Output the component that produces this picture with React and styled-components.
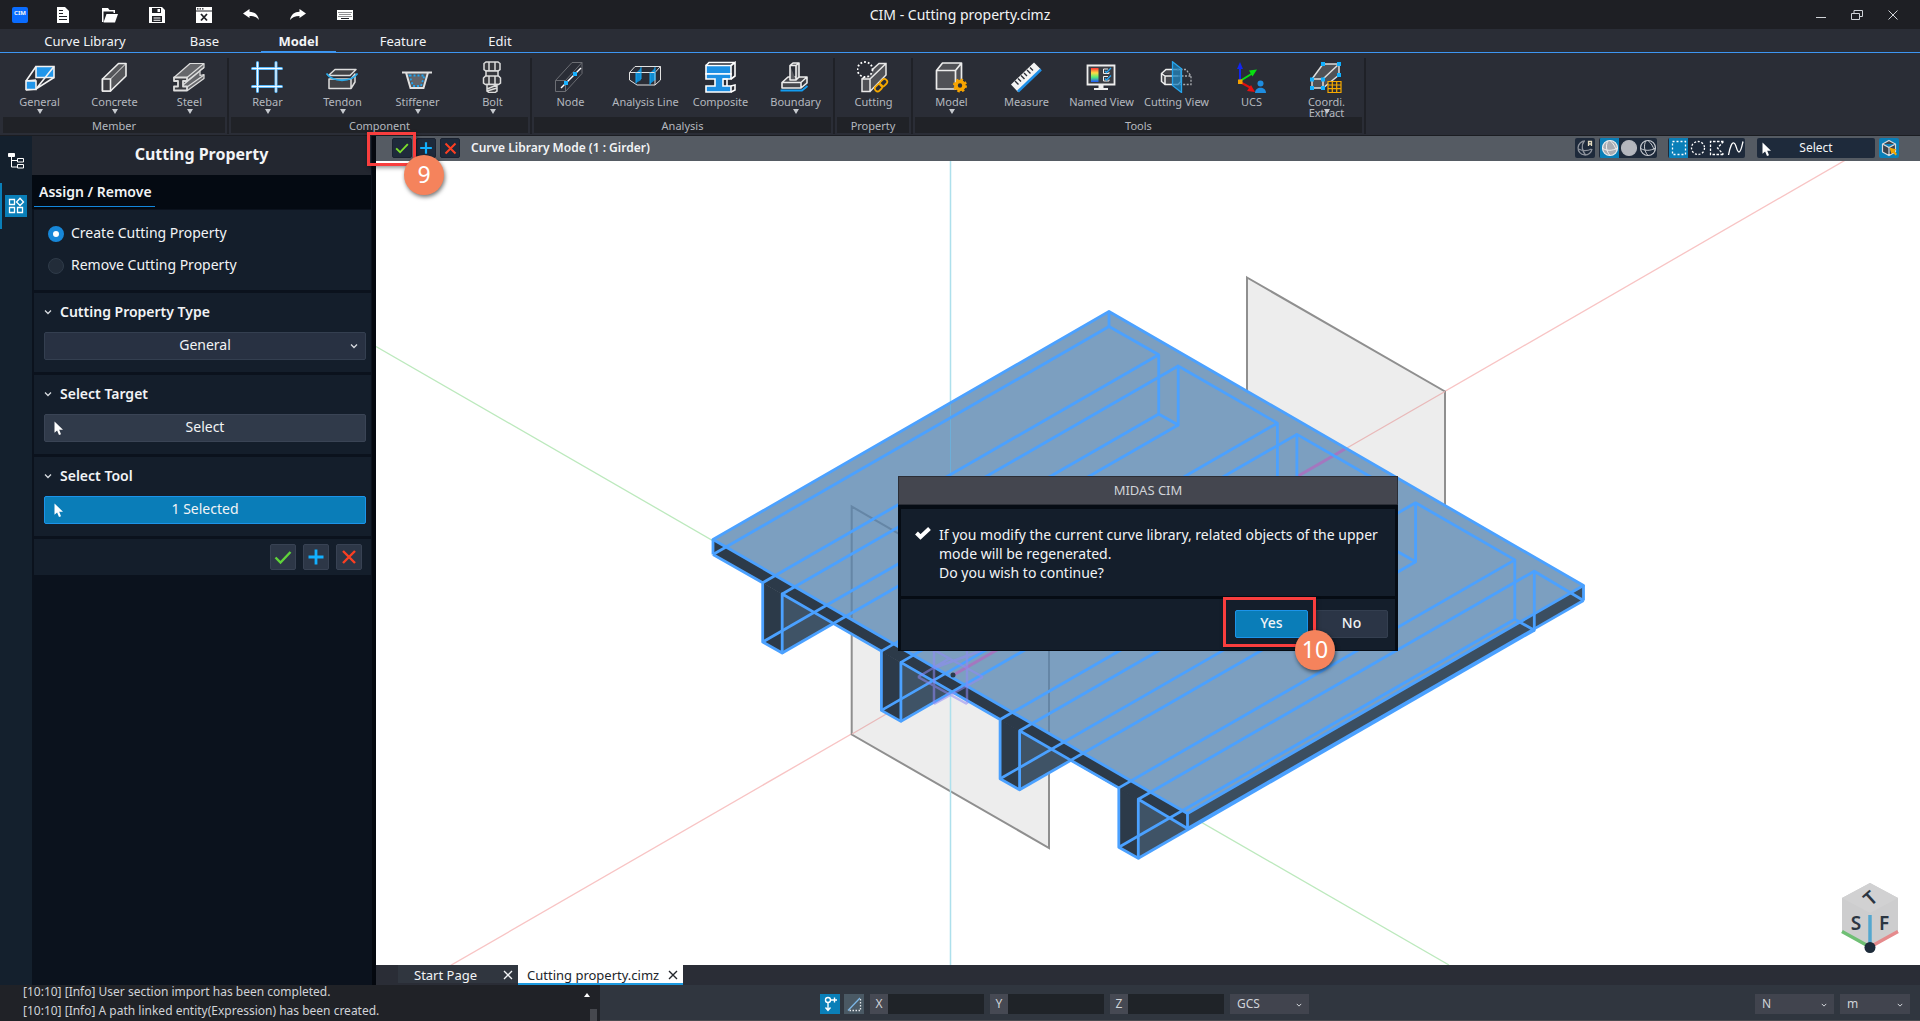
import React, { Component } from 'react';
import styled, { createGlobalStyle, css } from 'styled-components';

const GlobalStyle = createGlobalStyle`
  *, *::before, *::after { box-sizing: border-box; }
  html, body, #root { height: 100%; }
  body {
    margin: 0;
    background: #0b121d;
    color: #f2f4f6;
    font: 14px/20px "Noto Sans", sans-serif;
  }
  button, input, select {
    margin: 0;
    padding: 0;
    border: 0;
    color: inherit;
    font: inherit;
  }
  svg { display: block; flex: none; }
`;

/* ---------- page frame ---------- */

const Window = styled.div`
  display: flex;
  flex-direction: column;
  min-height: 100vh;
`;

const Main = styled.div`
  display: grid;
  grid-template-columns: 32px 340px minmax(0, 1fr);
  flex: 1;
`;

/* ---------- title bar ---------- */

const TitleBar = styled.header`
  display: grid;
  grid-template-columns: 1fr auto 1fr;
  align-items: center;
  height: 29px;
  background: #1e1f24;
`;

const QuickTools = styled.div`
  display: flex;
  gap: 23px;
  padding-left: 12px;
`;

const WindowControls = styled.div`
  display: flex;
  justify-content: flex-end;
  gap: 12px;
  padding-right: 15px;
`;

const BareButton = styled.button`
  display: flex;
  align-items: center;
  justify-content: center;
  width: ${p => p.$width || 24}px;
  height: 24px;
  background: none;
`;

const AppBadge = styled.span`
  width: 16px;
  height: 16px;
  border-radius: 2px;
  background: #0a6cff;
  font-size: 6px;
  font-weight: 700;
  line-height: 12px;
  text-align: center;
`;

/* ---------- ribbon ---------- */

const Tabs = styled.nav`
  display: flex;
  height: 24px;
  padding-left: 22px;
  background: #2a2d36;
  border-bottom: 1px solid #3d96f2;
`;

const Tab = styled.a`
  width: ${p => p.$width}px;
  height: 23px;
  line-height: 25px;
  font-size: 13px;
  text-align: center;
  text-decoration: none;
  color: #f2f4f6;
  ${p => p.$active && css`
    font-weight: 700;
    box-shadow: inset 0 -1px #3d96f2;
  `}
`;

const RibbonBar = styled.div`
  display: flex;
  height: 83px;
  padding-left: 2px;
  background: #2a2d36;
  border-bottom: 1px solid #1b1d22;
`;

const RibbonGroup = styled.section`
  display: flex;
  flex-direction: column;
  justify-content: space-between;
  margin: 5px 1px 1px 0;
  border-right: 2px solid #1f2127;
`;

const RibbonRow = styled.div`
  display: flex;
`;

const RibbonButton = styled.button`
  position: relative;
  display: flex;
  flex-direction: column;
  align-items: center;
  width: 75px;
  height: 56px;
  padding-top: 3px;
  background: none;
  color: #b4b8bf;
  font-size: 11px;
  line-height: 11px;

  svg { margin-right: 2px; }
`;

const RibbonLabel = styled.span`
  display: flex;
  justify-content: center;
  width: 50px;
  margin-top: 3px;
  white-space: ${p => (p.$wrap ? 'normal' : 'nowrap')};
`;

const Caret = styled.span`
  position: absolute;
  top: 51px;
  border: 3px solid transparent;
  border-top: 5px solid #c6c9ce;
  border-bottom: 0;
`;

const GroupName = styled.h2`
  margin: 0 2px 1px 1px;
  height: 16px;
  background: #202227;
  color: #b4b8bf;
  font-size: 11px;
  font-weight: 400;
  line-height: 17px;
  text-align: center;
`;

/* ---------- left side ---------- */

const Rail = styled.nav`
  display: flex;
  flex-direction: column;
  padding-top: 1px;
  background: #14202d;
`;

const RailButton = styled.button`
  display: flex;
  align-items: center;
  justify-content: center;
  height: 46px;
  background: none;
  box-shadow: ${p => (p.$active ? 'inset 2px 0 #0a7fb8' : 'none')};

  svg {
    background: ${p => (p.$active ? '#0a7fb8' : 'none')};
  }
`;

const Panel = styled.aside`
  display: flex;
  flex-direction: column;
  padding-right: 1px;
  background: #0b121d;
`;

const PanelTitle = styled.h1`
  margin: 0;
  height: 39px;
  background: #232730;
  font-size: 16px;
  font-weight: 700;
  line-height: 36px;
  text-align: center;
`;

const PanelTabs = styled.div`
  height: 34px;
  padding: 1px 2px 0;
  background: #040a12;
`;

const PanelTab = styled.a`
  display: block;
  width: 121px;
  height: 31px;
  padding-left: 5px;
  border-bottom: 1px solid #1487dc;
  color: inherit;
  font-weight: 600;
  line-height: 31px;
  text-decoration: none;
  white-space: nowrap;
`;

const Sections = styled.div`
  display: flex;
  flex-direction: column;
  gap: 3px;
  padding: 1px 0 0 2px;
`;

const Section = styled.section`
  display: flex;
  flex-direction: column;
  height: 79px;
  padding: 9px 5px 0 10px;
  background: #141e2b;
`;

const Choices = styled(Section)`
  height: 80px;
  padding: 8px 14px;
`;

const Choice = styled.label`
  display: flex;
  align-items: center;
  gap: 7px;
  height: 32px;
  line-height: 18px;

  span { padding-bottom: 2px; }
`;

const Radio = styled.input`
  appearance: none;
  width: 16px;
  height: 16px;
  border: 1px solid #2f3b49;
  border-radius: 50%;
  background: #222c39;

  &:checked {
    border: 5px solid #1787d8;
    background: #fff;
  }
`;

const SectionHead = styled.h2`
  display: flex;
  align-items: center;
  gap: 8px;
  margin: 0 0 10px;
  font-size: 14px;
  font-weight: 600;
  line-height: 20px;
`;

const Field = styled.div`
  position: relative;

  > svg {
    position: absolute;
    top: 10px;
    right: 8px;
    pointer-events: none;
  }
`;

const PanelSelect = styled.select`
  appearance: none;
  width: 100%;
  height: 28px;
  padding-bottom: 2px;
  border: 1px solid #343f50;
  border-radius: 2px;
  background: #283142;
  text-align: center;
  text-align-last: center;
`;

const PickButton = styled.button`
  display: grid;
  grid-template-columns: 10px 1fr 10px;
  align-items: center;
  height: 28px;
  padding: 0 9px;
  border: 1px solid ${p => (p.$active ? '#1c94ea' : '#3a4455')};
  border-radius: 2px;
  background: ${p => (p.$active ? '#0a7db8' : '#303a4a')};

  span { padding-bottom: 2px; }
`;

const PanelFooter = styled.div`
  display: flex;
  align-items: center;
  justify-content: flex-end;
  gap: 7px;
  height: 36px;
  padding-right: 9px;
  background: #141e2b;
`;

const IconButton = styled.button`
  display: flex;
  align-items: center;
  justify-content: center;
  width: ${p => p.$size}px;
  height: ${p => p.$size}px;
  border-radius: 2px;
  border: 1px solid ${p => (p.$size > 20 ? '#384253' : '#1a2230')};
  background: ${p => (p.$size > 20 ? '#2d3747' : '#1e2a3b')};
`;

/* ---------- work area ---------- */

const Work = styled.main`
  display: flex;
  flex-direction: column;
  min-width: 0;
  border-left: 4px solid #04080f;
`;

const ViewBar = styled.div`
  position: relative;
  z-index: 2;
  display: flex;
  align-items: center;
  gap: 4px;
  height: 25px;
  padding: 0 21px 1px 16px;
  background: #555b63;
`;

const ModeName = styled.strong`
  flex: 1;
  margin-left: 7px;
  font-size: 12px;
  font-weight: 600;
`;

const ToolSet = styled.div`
  display: flex;
  height: 20px;
  border-radius: 2px;
  background: #1e2a3b;
  padding-left: ${p => (p.$after ? 1 : 0)}px;
  margin-right: ${p => p.$after || 0}px;
  overflow: hidden;
`;

const ViewTool = styled.button`
  display: flex;
  align-items: center;
  justify-content: center;
  width: ${p => (p.$wide ? 20 : 19)}px;
  height: 20px;
  background: ${p => (p.$active ? '#0a7fb8' : 'none')};
`;

const SelectMode = styled.button`
  display: grid;
  grid-template-columns: 10px 1fr 10px;
  align-items: center;
  width: 118px;
  height: 20px;
  padding: 0 5px;
  border-radius: 2px;
  background: #1e2a3b;
  font-size: 12px;

  span { padding-bottom: 2px; }
`;

const Viewport = styled.div`
  position: relative;
  flex: 1;
  display: flex;
  align-items: center;
  justify-content: center;
  min-height: 600px;
  background: #fff;
`;

const Scene = styled.svg`
  position: absolute;
  inset: 0;
  width: 100%;
  height: 100%;
`;

const ViewCube = styled.svg`
  position: absolute;
  right: 18px;
  bottom: 8px;
`;

const DocTabs = styled.div`
  display: flex;
  height: 20px;
  padding-left: 22px;
  background: #2a2d36;
`;

const DocTab = styled.div`
  display: flex;
  align-items: center;
  justify-content: space-between;
  width: ${p => (p.$active ? 165 : 120)}px;
  padding: 1px 4px 0 ${p => (p.$active ? 9 : 16)}px;
  background: ${p => (p.$active ? '#fff' : '#30363f')};
  border-bottom: 2px solid ${p => (p.$active ? '#1c9ae0' : '#2a2d36')};
  color: ${p => (p.$active ? '#22252b' : '#f2f4f6')};
  font-size: 13px;
  line-height: 18px;
  white-space: nowrap;
`;

const CloseTab = styled.button`
  display: flex;
  padding: 3px 0;
  background: none;
`;

/* ---------- callouts ---------- */

const Outline = styled.span`
  position: absolute;
  left: ${p => p.$left}px;
  top: ${p => p.$top}px;
  width: ${p => p.$width}px;
  height: ${p => p.$height}px;
  border: 3px solid #f93e3e;
  box-shadow: 1px 2px 4px rgba(0, 0, 0, 0.4);
  pointer-events: none;
`;

const Marker = styled.span`
  position: absolute;
  left: ${p => p.$left}px;
  top: ${p => p.$top}px;
  width: 40px;
  height: 40px;
  border-radius: 50%;
  background: #f5835c;
  box-shadow: 1px 2px 4px rgba(0, 0, 0, 0.55);
  color: #fff;
  font-size: 23px;
  line-height: 39px;
  text-align: center;
  pointer-events: none;
`;

/* ---------- dialog ---------- */

const Dialog = styled.div`
  position: relative;
  display: flex;
  flex-direction: column;
  width: 500px;
  border: solid #060c14;
  border-width: 0 3px 1px;
  background: #141e2b;
`;

const DialogTitle = styled.h2`
  height: 29px;
  margin: 0 -3px;
  border: 1px solid #2b2e36;
  background: #44464f;
  color: #d0d3d8;
  font-size: 13px;
  font-weight: 400;
  line-height: 27px;
  text-align: center;
`;

const DialogBody = styled.div`
  display: flex;
  gap: 8px;
  height: 91px;
  padding: 16px 0 0 14px;
  border-top: 4px solid #060c14;
  line-height: 19px;
  white-space: nowrap;

  p { margin: 0; }
`;

const DialogActions = styled.div`
  display: flex;
  align-items: center;
  justify-content: flex-end;
  gap: 7px;
  height: 54px;
  padding-right: 7px;
  border-top: 3px solid #060c14;
`;

const DialogButton = styled.button`
  width: 73px;
  height: 28px;
  padding-bottom: 2px;
  border: 1px solid ${p => (p.$primary ? '#1c94ea' : '#343f50')};
  border-radius: 2px;
  background: ${p => (p.$primary ? '#0a7db8' : '#2b3546')};
  font-weight: 500;
`;

/* ---------- bottom ---------- */

const Bottom = styled.footer`
  display: grid;
  grid-template-columns: 600px 1fr;
  height: 36px;
  border-bottom: 1px solid #4a4b50;
  background: #30363f;
`;

const Log = styled.div`
  display: flex;
  justify-content: space-between;
  padding: 0 3px 0 23px;
  background: #202227;
  color: #d0d3d8;
  font-size: 12px;
  line-height: 14px;

  p { margin: 0; height: 19px; }
`;

const LogScroll = styled.div`
  display: flex;
  flex-direction: column;
  align-items: center;
  justify-content: space-between;
  width: 20px;
  padding-top: 8px;
`;

const LogThumb = styled.span`
  align-self: flex-end;
  width: 7px;
  height: 14px;
  background: #46484e;
`;

const Status = styled.div`
  display: flex;
  align-items: center;
  gap: 6px;
  padding: 0 10px 0 220px;
  color: #d0d3d8;
  font-size: 12px;
`;

const StatusTools = styled.div`
  display: flex;
  gap: 4px;
`;

const StatusTool = styled.button`
  display: flex;
  align-items: center;
  justify-content: center;
  width: 20px;
  height: 20px;
  background: ${p => (p.$active ? '#0a7fb8' : '#4a5964')};
`;

const Coord = styled.label`
  display: flex;
  height: 20px;
  line-height: 20px;
  text-align: center;

  span {
    width: 18px;
    background: #464953;
  }

  input {
    width: 96px;
    background: #1f2328;
  }
`;

const Unit = styled.div`
  position: relative;
  width: ${p => p.$width}px;
  margin-left: ${p => (p.$push ? 'auto' : 0)};

  select {
    display: block;
    appearance: none;
    width: 100%;
    height: 20px;
    padding-left: 7px;
    background: #41444e;
  }

  svg {
    position: absolute;
    top: 7px;
    right: 7px;
    pointer-events: none;
  }
`;

/* ---------- icons ---------- */

const Svg = ({ size = 32, children, ...rest }) => (
  <svg width={size} height={size} viewBox={`0 0 ${size} ${size}`} fill="none" aria-hidden="true" {...rest}>
    {children}
  </svg>
);

const Chevron = ({ w = 8 }) => (
  <svg width={w} height="8" viewBox="0 0 8 8" fill="none" stroke="#d8dbe0" strokeWidth="1.3" aria-hidden="true">
    <path d="M1 2.500 4 5.500 7 2.500" />
  </svg>
);

const Cursor = () => (
  <svg width="10" height="15" viewBox="0 0 10 15" fill="#fff" aria-hidden="true">
    <path d="M.5.5v11.2l2.6-2.3 1.9 4.6 2-.8-1.8-4.500H9z" />
  </svg>
);

const Check = ({ color = '#5fd33a', size = 18 }) => (
  <svg width={size} height={size} viewBox="0 0 18 18" fill="none" stroke={color} strokeWidth="2.4" aria-hidden="true">
    <path d="M1.500 9.500 6.500 14.500 16.500 4" />
  </svg>
);

const Plus = ({ size = 18 }) => (
  <svg width={size} height={size} viewBox="0 0 18 18" fill="none" stroke="#12b0ff" strokeWidth="2.8" aria-hidden="true">
    <path d="M9 1.500v15M1.500 9h15" />
  </svg>
);

const Cross = ({ color = '#fb3f22', size = 18, weight = 2.4 }) => (
  <svg width={size} height={size} viewBox="0 0 18 18" fill="none" stroke={color} strokeWidth={weight} aria-hidden="true">
    <path d="M3 3 15 15M15 3 3 15" />
  </svg>
);

const quickIcons = {
  'New': (
    <path fill="#fff" fillRule="evenodd" d="M2 0h8l4 4v12H2zM4 6v1h4V6zM4 9v1h8V9zM4 12v1h8v-1zM4 3v1h4V3z" />
  ),
  'Open': (
    <g fill="#fff">
      <path d="M0 15V1h6l1.500 2H13v3h-1.500V4.500H1.500V15z" />
      <path d="M4.500 7H16l-3 8.500H1.500z" />
    </g>
  ),
  'Save': (
    <path fill="#fff" fillRule="evenodd" d="M0 0h13l3 3v13H0zM3 1v5h9V1zM8.500 2H11v3H8.500zM3 9v6h10V9zM4.500 10.500h7v1h-7zM4.500 12.700h7v1h-7z" />
  ),
  'Close file': (
    <g>
      <path fill="#fff" fillRule="evenodd" d="M0 0h16v3.500H0zM1 1.200v1.200h1.500V1.200zM3.500 1.200v1.200H5V1.200zM6 1.200v1.200h1.500V1.200zM0 4.500h16V16H0z" />
      <path stroke="#1e1f24" strokeWidth="1.8" d="m5 7 6 6.500M11 7l-6 6.500" />
    </g>
  ),
  'Undo': <path fill="#fff" d="M0 6.500 6.500 2v2.800c5 .2 8.500 2.700 9.500 8.200-2.300-2.800-5-4-9.500-4V11z" />,
  'Redo': <path fill="#fff" d="M16 6.500 9.500 2v2.800C4.500 5 1 7.500 0 13c2.300-2.800 5-4 9.500-4V11z" />,
  'Keyboard': (
    <g>
      <path fill="#fff" d="M0 3h16v10H0z" />
      <path stroke="#1e1f24" strokeDasharray="1 1" d="M1.500 5.500h13M2.500 7.500h12M1.500 9.500h13" />
      <path stroke="#1e1f24" d="M4 11.500h8" />
    </g>
  ),
};

const ribbonIcons = {
  'General': (
    <g stroke="#f2f2f2" strokeWidth="1.600">
      <path fill="#2196ea" d="M13 5.500h18v11H13z" />
      <path d="M3 20 13 5.500M3 29l10-1 18-11.500M13 28 31 5.500M3 20l10-1" />
      <path fill="#2196ea" d="M3 20h10v8.500H3z" />
    </g>
  ),
  'Concrete': (
    <g stroke="#eee" strokeWidth="1.600" strokeLinejoin="round">
      <path fill="#55565a" d="M4.500 18 20.500 2.500H28V15L12.500 30h-8z" />
      <path fill="#3a3b40" d="M4.500 18h8v12h-8z" />
      <path strokeWidth="1" d="M12.500 18 28 2.500" />
    </g>
  ),
  'Steel': (
    <g stroke="#ddd" strokeWidth="1.200" strokeLinejoin="round">
      <path fill="#66676b" d="M1 16.500 17 2.500h14v4l-4 3v5l4-1v4L14.500 29.500z" />
      <path d="M14 16.500 31 2.500M14 20 31 6.500M10 24 27 10M14 26l17-12" />
      <path fill="#3a3b40" strokeWidth="1.800" d="M1 16.500h13V20h-4v5.500h4v4H1v-4h4V20H1z" />
    </g>
  ),
  'Rebar': (
    <g strokeLinecap="round">
      <path stroke="#5cb8f8" strokeWidth="3" d="M1.500 7.500h29M1.500 25.500h29M6.500 1.500v29M25 1.500v29" />
      <path stroke="#f5fbff" strokeWidth="1.200" d="M1.500 7.500h29M1.500 25.500h29M6.500 1.500v29M25 1.500v29" />
    </g>
  ),
  'Tendon': (
    <g strokeWidth="1.500" strokeLinejoin="round">
      <path stroke="#ddd" fill="#404145" d="M9 8.500h21l-6 6H2.500zM3 18h22v9.500H3zM25 18l4-5v8l-4 6.500" />
      <path stroke="#2aa9e8" strokeWidth="1.800" d="M.5 12.500c6 9 25 9 31 0" />
    </g>
  ),
  'Stiffener': (
    <g>
      <path fill="#55575c" stroke="#e0e0e0" strokeWidth="2" d="M1 11.500h30M5 11.500 9.500 27h13L27 11.500" />
      <path fill="#62646a" stroke="#22a5f0" strokeWidth="1.800" strokeDasharray="2 2" d="M8.500 14.500h15L20 25h-8z" />
    </g>
  ),
  'Bolt': (
    <g stroke="#dcdcdc" strokeWidth="1.500" fill="#38393e">
      <path d="M8 2.500 10 1h12l2 1.500v6L22 10H10L8 8.500zM13 1v9M19 1v9" />
      <path d="M10 10h12v5H10zM7.500 17l2-2h13l2 2v5l-2 1.500h-13L7.500 22zM13 15v8M19 15v8" />
      <path d="M11 23.500h10V30l-2 1.500h-6L11 30zM11 28l10-4M11 30l10-3" />
    </g>
  ),
  'Node': (
    <g>
      <path stroke="#6b6d73" d="M1.500 19.500h10v11h-10zM1.500 19.500 18 1.500h10l-16.500 18M28 1.500v11L11.500 30.500" />
      <path stroke="#fff" strokeWidth="1.500" d="M7 27 27 7" />
      <path fill="#19b2ff" d="M10 20h4v4h-4zM19 11h4v4h-4z" />
    </g>
  ),
  'Analysis Line': (
    <g>
      <path fill="#0f8bd0" d="m7 12 5-5v12l-5 3zM21 12l5-5v12l-5 4z" />
      <path stroke="#e2e2e2" d="M.5 11.500 6 5.500h25.500V19L26 24H8L.5 19zM.5 11.500H26l5.500-6M26 11.500V24" />
      <path stroke="#18a9f5" d="M7 11.500v11M12 6v12M21 11.500V24M26 6v13" />
    </g>
  ),
  'Composite': (
    <g>
      <path stroke="#fff" strokeWidth="1.600" fill="#1c8fe3" d="M2 4.500h25V13H2z" />
      <path stroke="#fff" strokeWidth="1.600" fill="#1c8fe3" d="M2 13h25v5h-8v7h8v6H2v-6h9v-7H2z" />
      <path stroke="#fff" strokeWidth="1.600" d="M2 4.500 5 1.500h26M27 4.500l4-3v13.500l-4 3M19 18h4v7M27 25l4-1v5l-4 2" />
    </g>
  ),
  'Boundary': (
    <g stroke="#ececec" strokeWidth="1.600" strokeLinejoin="round">
      <path fill="#45464b" d="M3 21.500 9 16h19l-6 5.500V27H3zM22 21.500H3M22 27l6-5v-6" />
      <path fill="#5a5b60" d="M11 4.500 14 2h6v14l-3 3h-6zM17 19V4.500h-6M17 4.500 20 2" />
      <path stroke="#129cf0" strokeWidth="1.800" d="M1.500 29.500H23l5.500-4.500" />
    </g>
  ),
  'Cutting': (
    <g>
      <path fill="#505156" stroke="#e8e8e8" strokeWidth="1.500" d="M5 18h8v12.500H5zM5 18 22 2.500h7V14L13 30.500M13 18 29 2.500" />
      <circle cx="8" cy="8.500" r="7.500" fill="#2a2d36" stroke="#fff" strokeWidth="1.800" strokeDasharray="1.800 2" />
      <g stroke="#f5a800" strokeWidth="1.800">
        <rect x="17.500" y="24" width="8" height="5.500" rx="2.700" transform="rotate(-45 21.500 26.700)" />
        <rect x="22.500" y="19" width="8" height="5.500" rx="2.700" transform="rotate(-45 26.500 21.700)" />
      </g>
    </g>
  ),
  'Model': (
    <g>
      <path fill="#505156" stroke="#ececec" strokeWidth="1.700" strokeLinejoin="round" d="m1.500 9.500 6-7.500h19v18l-6 8h-19zM1.500 9.500h19V28M20.500 9.500l6-7.500" />
      <circle cx="25" cy="24.500" r="4" stroke="#f7a400" strokeWidth="3.600" fill="#2a2d36" />
      <circle cx="25" cy="24.500" r="6" stroke="#f7a400" strokeWidth="2" strokeDasharray="2.400 2.300" />
    </g>
  ),
  'Measure': (
    <g>
      <path fill="#f4f4f4" d="m1 23.500 23-22 7 7-23 22.500z" />
      <path stroke="#1e90e8" strokeWidth="2.500" d="m8 30.500 23-22" />
      <path stroke="#2a2d36" strokeWidth="1.400" d="m5 20 3.500 3.500M8 17.500l3 3M11 14.500l3.500 3.500M14 12l3 3M17 9l3.500 3.500M20 6.500l3 3" />
    </g>
  ),
  'Named View': (
    <g>
      <defs>
        <linearGradient id="spectrum" x1="0" y1="0" x2="0" y2="1">
          <stop offset="0" stopColor="#f33" />
          <stop offset=".35" stopColor="#fd4" />
          <stop offset=".65" stopColor="#5e7" />
          <stop offset="1" stopColor="#25f" />
        </linearGradient>
      </defs>
      <path fill="#3a3c42" stroke="#eee" strokeWidth="1.800" d="M2.500 4.500h27v19h-27z" />
      <path fill="#eee" d="M13.500 24h5v3h-5zM9 27h14v2H9z" />
      <path fill="url(#spectrum)" d="M6 7h7.500v14H6z" />
      <path stroke="#eee" d="M23 8h-4.500v4.500H24V11M23 15.500h-4.500V20H24v-1.500" />
      <path stroke="#25a7f5" strokeWidth="1.300" d="m20 10 1.500 1.500L26 7M20 17.500 21.500 19 26 14.500" />
    </g>
  ),
  'Cutting View': (
    <g>
      <path fill="#45464b" stroke="#eee" strokeWidth="1.500" d="M1.500 12.500 6 8.500h15v12l-3 3H5l-3.500-3zM1.500 12.500 5 15h13M5 15v8" />
      <path stroke="#a8abb0" strokeWidth="1.300" strokeDasharray="2 1.500" d="M17 8.500h9l5 6.500v8.500H18M18 15h13" />
      <path fill="#1b7fb8" fillOpacity=".75" stroke="#26a6ee" strokeWidth="1.300" d="m12.500.8 9 7v23.700l-9-7z" />
    </g>
  ),
  'UCS': (
    <g strokeWidth="2">
      <path stroke="#1226f0" d="M5 20V5" />
      <path fill="#1226f0" d="M5 1 8 8H2z" />
      <path stroke="#08dd10" d="m5 20 13-8" />
      <path fill="#08e010" d="m22 8.500-8 1 3.500 6z" />
      <path stroke="#e01010" d="m5 21 11 6" />
      <path fill="#e81010" d="m20 31-8-1 4-6z" />
      <path fill="#f5a000" d="M3 18.500h4.500V23H3z" />
      <circle cx="25.500" cy="22.500" r="3" fill="#1e8de0" />
      <path fill="#1e8de0" d="M20 32c0-7 11-7 11 0z" />
    </g>
  ),
  'Coordi. Extract': (
    <g>
      <path fill="#505156" stroke="#ddd" strokeWidth="1.500" d="M2 18 13 3h16v11L13 27H2zM2 18h11v9M13 18 29 3" />
      <path fill="#12b0ff" d="M0 16.500h4v4H0zM11 16.500h4v4h-4zM0 25h4v4H0zM11 25h4v4h-4zM11 1h4v4h-4zM27 1h4v4h-4zM27 12h4v4h-4z" />
      <path fill="#2a2d36" stroke="#f5a800" strokeWidth="1.200" d="M18 20.500h13v11H18zM18 24h13M18 27.700h13M22.300 20.500v11M26.700 20.500v11" />
    </g>
  ),
};

const ribbon = [
  { name: 'Member', items: ['General', 'Concrete', 'Steel'] },
  { name: 'Component', items: ['Rebar', 'Tendon', 'Stiffener', 'Bolt'] },
  { name: 'Analysis', items: ['Node', 'Analysis Line', 'Composite', 'Boundary'] },
  { name: 'Property', items: ['Cutting'] },
  { name: 'Tools', items: ['Model', 'Measure', 'Named View', 'Cutting View', 'UCS', 'Coordi. Extract'] },
];

const plainButtons = ['Node', 'Analysis Line', 'Composite', 'Cutting', 'Measure', 'Named View', 'Cutting View', 'UCS'];

const tabs = [
  { name: 'Curve Library', width: 126 },
  { name: 'Base', width: 113 },
  { name: 'Model', width: 75 },
  { name: 'Feature', width: 134 },
  { name: 'Edit', width: 60 },
];

/* ---------- bridge deck drawing ---------- */

const SPAN = [396, -228];
const STEP = [118.7, 68.4];

const at = ([x, y], k = 0, along = 0) => [
  x + STEP[0] * k + SPAN[0] * along,
  y + STEP[1] * k + SPAN[1] * along,
];
const points = list => list.map(p => p.join(',')).join(' ');

const deck = { left: [713, 539.5], back: [1109, 311.5], right: [1583.5, 585.5], front: [1187.5, 813.5] };
const webTop = [762.7, 582.7];
const webFoot = [762.7, 642];
const webToe = [782.2, 653];
const webInner = [782.2, 594];
const girders = [0, 1, 2, 3];

const profile = [
  [713, 554.5],
  ...girders.flatMap(k => [webTop, webFoot, webToe, webInner].map(p => at(p, k))),
  [1187.5, 828.5],
];

const BridgeScene = () => (
  <Scene viewBox="376 161 1544 804" preserveAspectRatio="xMidYMid slice" fill="none" aria-label="Bridge deck model">
    <path stroke="#f8c4c4" strokeWidth="1.300" d="M376 1008.500 1920 117" />
    <path stroke="#bce9bd" strokeWidth="1.300" d="M376 346.500 1449 965" />
    <path fill="#ededed" stroke="#8f8f8f" strokeWidth="2" d="M1247 277.500 1445 391.500V620L1247 506z" />
    <path fill="#ededed" stroke="#8f8f8f" strokeWidth="2" d="M851.700 506.500 1049 620.500V848L851.700 734.500z" />
    <path stroke="#e9b9b9" strokeWidth="1.300" d="M1445 391.500 1340 452M852 734 900 706" />
    <path stroke="#ade0ec" strokeWidth="1.500" d="M950.500 161V965" />

    {girders.map(k => (
      <g key={k}>
        <polygon fill="#3f5366" points={points([at(webInner, k), at(webToe, k), at([833, 623.5], k)])} />
        <polygon fill="#2c3a49" points={points([webTop, webFoot, webToe, webInner].map(p => at(p, k)))} />
      </g>
    ))}
    <polygon fill="#2c3a49" points={points([deck.left, deck.front, [1187.5, 828.5], [713, 554.5]])} />
    <polygon fill="#3b4e60" points={points([deck.front, deck.right, [1583.5, 600.5], [1187.5, 828.5]])} />
    <polygon fill="#7c9fc0" points={points([deck.left, deck.back, deck.right, deck.front])} />

    <path stroke="#5f809f" strokeWidth="2" strokeOpacity=".8" d="M851.700 618V506.500L1049 620.500V732" />
    <path stroke="#6cafd9" d="M950.500 402V640" />
    <path stroke="#a477bf" strokeWidth="3" d="M950 677 1345 449" />

    <g stroke="#4ba1ff" strokeWidth="2.800" strokeLinejoin="round">
      <polyline points={points(profile.map(p => at(p, 0, 1)))} />
      {profile.map((p, i) => (
        <polyline key={i} points={points([p, at(p, 0, 1)])} />
      ))}
      <polyline points={points(profile)} />
      <polygon points={points([deck.left, deck.back, deck.right, deck.front])} />
      <path d="M713 539.500v15M1109 311.500v15M1583.500 585.500v15M1187.500 813.500v15" />
    </g>

    <g stroke="#9088f5" strokeOpacity=".55" strokeWidth="2.500">
      <path d="M934 650v54M967 650v54M918 677l32-19M918 677l49 27M983 677l-49 27M983 677l-49-27M934 668l49-18" />
    </g>
    <circle cx="953" cy="675" r="2.500" fill="#2c3a49" />
  </Scene>
);

const Cube = () => (
  <ViewCube width="64" height="76" viewBox="0 0 64 76" aria-label="View cube" fontSize="19" fontWeight="600" textAnchor="middle">
    <path fill="#cdcdce" d="M32 2 60 17v34L32 66 4 51V17z" />
    <path fill="#d1d1d2" d="M32 2 60 17 32 32 4 17z" />
    <path stroke="#6fbf74" strokeWidth="3.500" d="M4 50.500 32 66" />
    <path stroke="#e58a8c" strokeWidth="3.500" d="M60 50.500 32 66" />
    <text x="18" y="49" fill="#2b3642">S</text>
    <text x="46" y="49" fill="#2b3642">F</text>
    <text x="32" y="24" fill="#2b3642" transform="rotate(-42 32 17)">T</text>
    <path stroke="#54a7cf" strokeWidth="3.500" d="M32 34v32" />
    <circle cx="32" cy="66.500" r="5.500" fill="#1d2b3a" />
  </ViewCube>
);

const Sphere = ({ fill = 'none', lines = '#c7cad0', children }) => (
  <Svg size={18}>
    <circle cx="9" cy="9" r="7.500" fill={fill} stroke={lines} strokeWidth="1.200" />
    {children}
  </Svg>
);

const globe = 'M7 1.800C4.500 6 5 12 9 16.500M1.800 9.500c4 2.500 10 2.500 14.500-.5M9 1.500c3.500 3 5 6 6.500 10';

class App extends Component {
  renderTitleBar() {
    return (
      <TitleBar>
        <QuickTools>
          <BareButton $width={16} aria-label="CIM"><AppBadge>CIM</AppBadge></BareButton>
          {Object.keys(quickIcons).map(name => (
            <BareButton key={name} aria-label={name}>
              <Svg size={16}>{quickIcons[name]}</Svg>
            </BareButton>
          ))}
        </QuickTools>
        <span>CIM - Cutting property.cimz</span>
        <WindowControls>
          <BareButton aria-label="Minimize">
            <Svg size={12} stroke="#d0d3d8"><path d="M1 8.500h10" /></Svg>
          </BareButton>
          <BareButton aria-label="Restore">
            <Svg size={12} stroke="#d0d3d8"><path d="M.5 4.500h8v6h-8zM3 4.500v-3h8.500v6H9" /></Svg>
          </BareButton>
          <BareButton aria-label="Close">
            <Svg size={12} stroke="#d0d3d8"><path d="m1.500 1.500 9 9M10.500 1.500l-9 9" /></Svg>
          </BareButton>
        </WindowControls>
      </TitleBar>
    );
  }

  renderRibbon() {
    return (
      <>
        <Tabs>
          {tabs.map(tab => (
            <Tab key={tab.name} href="#" $width={tab.width} $active={tab.name === 'Model'}>{tab.name}</Tab>
          ))}
        </Tabs>
        <RibbonBar>
          {ribbon.map(group => (
            <RibbonGroup key={group.name}>
              <RibbonRow>
                {group.items.map(item => (
                  <RibbonButton key={item}>
                    <Svg>{ribbonIcons[item]}</Svg>
                    <RibbonLabel $wrap={item === 'Coordi. Extract'}>{item}</RibbonLabel>
                    {!plainButtons.includes(item) && <Caret />}
                  </RibbonButton>
                ))}
              </RibbonRow>
              <GroupName>{group.name}</GroupName>
            </RibbonGroup>
          ))}
        </RibbonBar>
      </>
    );
  }

  renderPanel() {
    return (
      <>
        <Rail>
          <RailButton aria-label="Works tree">
            <Svg size={22} stroke="#fff">
              <path fill="#fff" d="M3.500 4.500h6v3h-6z" />
              <path d="M6.500 8v10h6M6.500 11.500h6M12.500 9.500h6v3.500h-6zM12.500 15.500h6V19h-6z" />
            </Svg>
          </RailButton>
          <RailButton $active aria-label="Task pane">
            <Svg size={22} stroke="#fff" strokeWidth="1.300">
              <path d="M4.500 4.500h5v5h-5zM4.500 12.500h5v5h-5zM12.500 12.500h5v5h-5zM15 3.200 18.500 7 15 10.500 11.500 7z" />
            </Svg>
          </RailButton>
        </Rail>
        <Panel>
          <PanelTitle>Cutting Property</PanelTitle>
          <PanelTabs><PanelTab href="#">Assign / Remove</PanelTab></PanelTabs>
          <Sections>
            <Choices>
              <Choice><Radio type="radio" name="action" defaultChecked /><span>Create Cutting Property</span></Choice>
              <Choice><Radio type="radio" name="action" /><span>Remove Cutting Property</span></Choice>
            </Choices>
            <Section>
              <SectionHead><Chevron />Cutting Property Type</SectionHead>
              <Field>
                <PanelSelect aria-label="Cutting Property Type"><option>General</option></PanelSelect>
                <Chevron />
              </Field>
            </Section>
            <Section>
              <SectionHead><Chevron />Select Target</SectionHead>
              <PickButton><Cursor /><span>Select</span></PickButton>
            </Section>
            <Section>
              <SectionHead><Chevron />Select Tool</SectionHead>
              <PickButton $active><Cursor /><span>1 Selected</span></PickButton>
            </Section>
            <PanelFooter>
              <IconButton $size={26} aria-label="OK"><Check /></IconButton>
              <IconButton $size={26} aria-label="Apply"><Plus /></IconButton>
              <IconButton $size={26} aria-label="Cancel"><Cross /></IconButton>
            </PanelFooter>
          </Sections>
        </Panel>
      </>
    );
  }

  renderViewBar() {
    return (
      <ViewBar>
        <IconButton $size={20} aria-label="Finish"><Check color="#7be02c" size={14} /></IconButton>
        <IconButton $size={20} aria-label="Add"><Plus size={14} /></IconButton>
        <IconButton $size={20} aria-label="Discard"><Cross size={15} /></IconButton>
        <ModeName>Curve Library Mode (1 : Girder)</ModeName>
        <ToolSet>
          <ViewTool $wide aria-label="Auto shading">
            <Svg size={18} stroke="#8d929b" strokeWidth="1.300">
              <path d="M9 2a7 7 0 1 0 7 8M8 2.500C5 6 6 12 9.500 16M2.500 10c4 2 9 2 13 0" />
              <path stroke="#e5dcc0" d="M12.500 7V2.500h3V7M12.500 5h3" />
            </Svg>
          </ViewTool>
        </ToolSet>
        <ToolSet $after={7}>
          <ViewTool $active aria-label="Shaded with edges">
            <Sphere fill="#a9acb2" lines="#eee"><path stroke="#eee" d={globe} /></Sphere>
          </ViewTool>
          <ViewTool aria-label="Shaded"><Sphere fill="#b4b7be" lines="#b4b7be" /></ViewTool>
          <ViewTool aria-label="Wireframe"><Sphere><path stroke="#c7cad0" d={globe} /></Sphere></ViewTool>
        </ToolSet>
        <ToolSet $after={8}>
          <ViewTool $active aria-label="Box select">
            <Svg size={18} stroke="#fff" strokeWidth="1.300"><path strokeDasharray="2 2" d="M2.500 2.500h13v13h-13z" /></Svg>
          </ViewTool>
          <ViewTool aria-label="Circle select">
            <Svg size={18} stroke="#fff" strokeWidth="1.300"><circle strokeDasharray="2 1.700" cx="9" cy="9" r="6.500" /></Svg>
          </ViewTool>
          <ViewTool aria-label="Polygon select">
            <Svg size={18} stroke="#fff" strokeWidth="1.300"><path strokeDasharray="2.500 1.500" d="M15.500 2.500h-13v13h13M15.500 2.500 9.500 9l6 6.500" /></Svg>
          </ViewTool>
          <ViewTool aria-label="Polyline select">
            <Svg size={18} stroke="#fff" strokeWidth="1.300"><path d="M1.500 16C3 8 5 3 7 4c2.500 1 2.500 9 5 9 2 0 3-6 4-10.500" /></Svg>
          </ViewTool>
        </ToolSet>
        <SelectMode><Cursor /><span>Select</span></SelectMode>
        <ToolSet>
          <ViewTool $wide $active aria-label="Pick solid">
            <Svg size={18}>
              <path fill="#3c4149" stroke="#d9dbde" strokeWidth="1.200" d="M9 1.500 15.500 5v8L9 16.500 2.500 13V5zM2.500 5 9 8.500 15.500 5M9 8.500v8" />
              <path fill="#f5a800" d="m9.500 8.500 7 2-2 1.500 2.500 3-1.500 1.500-2.500-3L11.500 15z" />
            </Svg>
          </ViewTool>
        </ToolSet>
        <Outline $left={-9} $top={-4} $width={49} $height={34} />
        <Marker $left={28} $top={19}>9</Marker>
      </ViewBar>
    );
  }

  renderDialog() {
    return (
      <Dialog role="dialog" aria-label="MIDAS CIM">
        <DialogTitle>MIDAS CIM</DialogTitle>
        <DialogBody>
          <Svg size={16} stroke="#fff" strokeWidth="4"><path d="m1.500 8 4 4L14.500 3.500" /></Svg>
          <p>
            If you modify the current curve library, related objects of the upper
            <br />
            mode will be regenerated.
            <br />
            Do you wish to continue?
          </p>
        </DialogBody>
        <DialogActions>
          <DialogButton $primary>Yes</DialogButton>
          <DialogButton>No</DialogButton>
        </DialogActions>
        <Outline $left={322} $top={121} $width={93} $height={50} />
        <Marker $left={394} $top={154}>10</Marker>
      </Dialog>
    );
  }

  renderBottom() {
    return (
      <Bottom>
        <Log>
          <div>
            <p>[10:10] [Info] User section import has been completed.</p>
            <p>[10:10] [Info] A path linked entity(Expression) has been created.</p>
          </div>
          <LogScroll>
            <svg width="6" height="4" viewBox="0 0 6 4" fill="#fff" aria-hidden="true"><path d="M3 0 6 4H0z" /></svg>
            <LogThumb />
          </LogScroll>
        </Log>
        <Status>
          <StatusTools>
            <StatusTool $active aria-label="Snap">
              <Svg size={18} stroke="#fff" strokeWidth="1.400">
                <circle cx="7" cy="5" r="2.500" />
                <path d="M7 8v7M4.500 12.500 7 15.500l2.500-3M10 5h6M13.500 2.500v5" />
              </Svg>
            </StatusTool>
            <StatusTool aria-label="Ortho">
              <Svg size={18} stroke="#7db8e8" strokeWidth="1.300">
                <path d="M3 15.500 15 3" />
                <path stroke="#e5e8ea" strokeDasharray="1.500 1.500" d="M15.500 4v11.500H3" />
              </Svg>
            </StatusTool>
          </StatusTools>
          {['X', 'Y', 'Z'].map(axis => (
            <Coord key={axis}><span>{axis}</span><input type="text" /></Coord>
          ))}
          <Unit $width={79}>
            <select aria-label="Coordinate system"><option>GCS</option></select>
            <Chevron w={6} />
          </Unit>
          <Unit $width={79} $push>
            <select aria-label="Force unit"><option>N</option></select>
            <Chevron w={6} />
          </Unit>
          <Unit $width={70}>
            <select aria-label="Length unit"><option>m</option></select>
            <Chevron w={6} />
          </Unit>
        </Status>
      </Bottom>
    );
  }

  render() {
    return (
      <Window>
        <GlobalStyle />
        {this.renderTitleBar()}
        {this.renderRibbon()}
        <Main>
          {this.renderPanel()}
          <Work>
            {this.renderViewBar()}
            <Viewport>
              <BridgeScene />
              <Cube />
              {this.renderDialog()}
            </Viewport>
            <DocTabs>
              <DocTab>
                Start Page
                <CloseTab aria-label="Close Start Page"><Cross color="#f2f4f6" size={12} weight={2} /></CloseTab>
              </DocTab>
              <DocTab $active>
                Cutting property.cimz
                <CloseTab aria-label="Close Cutting property.cimz"><Cross color="#22252b" size={12} weight={2} /></CloseTab>
              </DocTab>
            </DocTabs>
          </Work>
        </Main>
        {this.renderBottom()}
      </Window>
    );
  }
}

export default App;
